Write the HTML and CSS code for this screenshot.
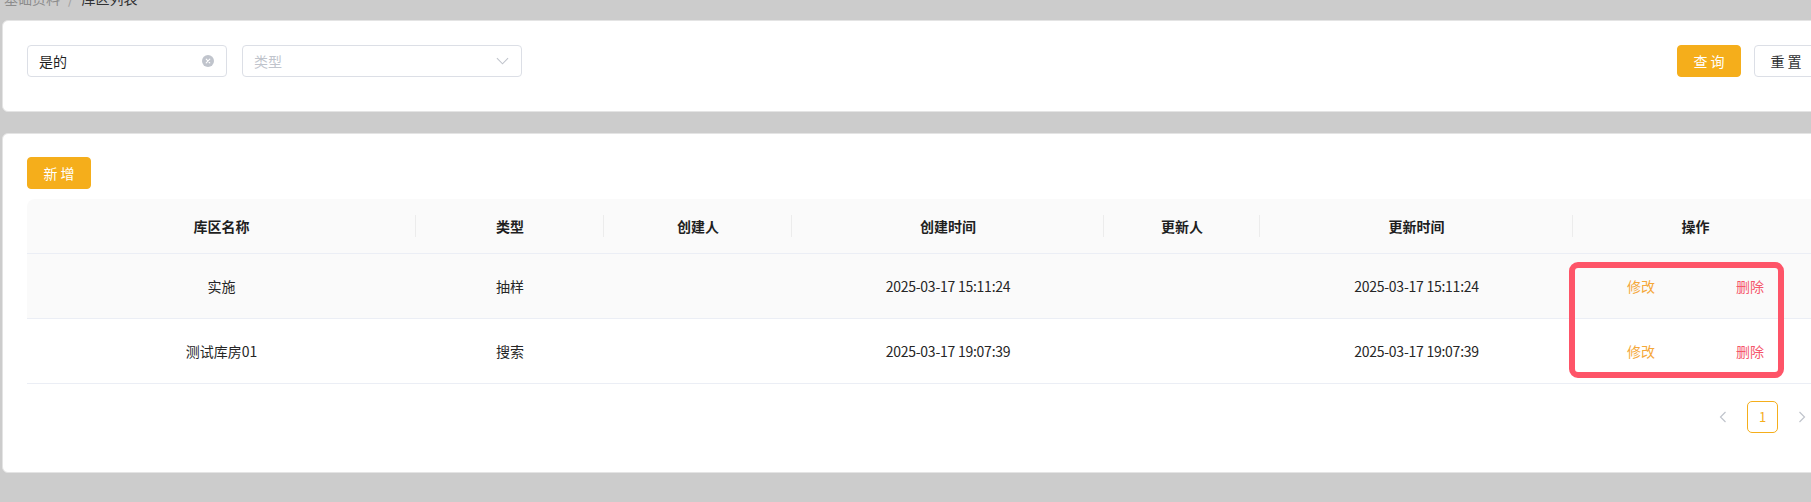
FILE: index.html
```html
<!DOCTYPE html>
<html lang="zh-CN">
<head>
<meta charset="UTF-8">
<meta name="viewport" content="width=device-width,initial-scale=1">
<title>库区列表</title>
<link rel="stylesheet" href="styles.css">
</head>

<body>
    <!-- breadcrumb, mostly scrolled off the top -->
    <div class="crumb">
        <div class="crumb-text">
            <span class="crumb-parent">基础资料</span>
            <span class="crumb-sep">/</span>
            <span class="crumb-current">库区列表</span>
        </div>
    </div>

    <!-- search form -->
    <section class="card search-card">
        <div class="search-fields">
            <div class="field field-input">
                <span class="field-value">是的</span>
                <svg class="clear-icon" viewBox="0 0 12 12">
                    <circle cx="6" cy="6" r="6" fill="#c0c4cc"/>
                    <path d="M4.2 4.2l3.6 3.6M7.8 4.2l-3.6 3.6" stroke="#fff" stroke-width="1.1" stroke-linecap="round"/>
                </svg>
            </div>
            <div class="field field-select">
                <span class="field-placeholder">类型</span>
                <svg class="select-arrow" viewBox="0 0 14 8">
                    <path d="M1 1l6 6 6-6" fill="none" stroke="#c0c4cc" stroke-width="1.2"/>
                </svg>
            </div>
        </div>
        <div class="search-actions">
            <button class="btn btn-primary">查 询</button>
            <button class="btn">重 置</button>
        </div>
    </section>

    <!-- list -->
    <section class="card list-card">
        <div class="toolbar">
            <button class="btn btn-primary">新 增</button>
        </div>

        <div class="table-wrap">
            <table class="data-table">
                <colgroup>
                    <col style="width:389px">
                    <col style="width:188px">
                    <col style="width:188px">
                    <col style="width:312px">
                    <col style="width:156px">
                    <col style="width:313px">
                    <col style="width:245px">
                </colgroup>
                <thead>
                    <tr>
                        <th>库区名称</th>
                        <th>类型</th>
                        <th>创建人</th>
                        <th>创建时间</th>
                        <th>更新人</th>
                        <th>更新时间</th>
                        <th>操作</th>
                    </tr>
                </thead>
                <tbody>
                    <tr class="striped">
                        <td>实施</td>
                        <td>抽样</td>
                        <td></td>
                        <td class="num">2025-03-17 15:11:24</td>
                        <td></td>
                        <td class="num">2025-03-17 15:11:24</td>
                        <td>
                            <div class="row-actions">
                                <a class="link-edit">修改</a>
                                <a class="link-del">删除</a>
                            </div>
                        </td>
                    </tr>
                    <tr>
                        <td>测试库房01</td>
                        <td>搜索</td>
                        <td></td>
                        <td class="num">2025-03-17 19:07:39</td>
                        <td></td>
                        <td class="num">2025-03-17 19:07:39</td>
                        <td>
                            <div class="row-actions">
                                <a class="link-edit">修改</a>
                                <a class="link-del">删除</a>
                            </div>
                        </td>
                    </tr>
                </tbody>
            </table>
            <!-- red highlight drawn over the action column -->
            <div class="mark-box"></div>
        </div>

        <div class="pager">
            <span class="pager-arrow">
                <svg viewBox="0 0 8 12"><path d="M6.5 1L1.5 6l5 5" fill="none" stroke="#c0c4cc" stroke-width="1.2"/></svg>
            </span>
            <span class="pager-num active">1</span>
            <span class="pager-arrow">
                <svg viewBox="0 0 8 12"><path d="M1.5 1l5 5-5 5" fill="none" stroke="#c0c4cc" stroke-width="1.2"/></svg>
            </span>
        </div>
    </section>
</body>
</html>
```

FILE: styles.css
```css
:root{
    --bg:#cccccc;
    --accent:#f5ae1b;
    --line:#ebeef5;
    --text:#303133;
    --muted:#c0c4cc;
}

*{margin:0;padding:0;box-sizing:border-box}
html,body{overflow:hidden}
body{
    font-family:"Noto Sans CJK SC","Liberation Sans",sans-serif;
    font-size:14px;
    color:var(--text);
    background:var(--bg);
    width:1844px;
}

/* breadcrumb ------------- */
.crumb{
    height:20px;
    overflow:hidden;
}
.crumb-text{
    margin-top:-9px;
    padding-left:4px;
    line-height:14px;
    display:flex;
}
.crumb-parent{color:#8c8c8c}
.crumb-sep{color:#a0a0a0;margin:0 8px}
.crumb-current{color:#303133}

/* cards ------------------ */
.card{
    margin-left:2px;
    width:1841px;
    background:#fff;
    border:1px solid #e4e4e4;
    border-radius:6px;
}
.search-card{
    display:flex;
    justify-content:space-between;
    align-items:flex-start;
    padding:24px 24px 34px;
}
.search-fields{
    display:flex;
    gap:15px;
}
.field{
    height:32px;
    border:1px solid #dcdfe6;
    border-radius:4px;
    display:flex;
    align-items:center;
    justify-content:space-between;
    padding:0 10px 0 11px;
}
.field-input{width:200px}
.field-select{width:280px}
.field-value{color:#1f1f1f;line-height:20px}
.field-placeholder{color:var(--muted);line-height:20px}
.clear-icon{width:12px;height:12px;margin-right:2px}
.select-arrow{width:13px;height:8px;margin-right:2px}

.search-actions{
    display:flex;
    gap:13px;
}
.btn{
    font-family:inherit;
    font-size:14px;
    height:32px;
    width:64px;
    border:1px solid #dcdfe6;
    border-radius:4px;
    background:#fff;
    color:#303133;
    line-height:30px;
    cursor:pointer;
}
.btn-primary{
    background:var(--accent);
    border-color:var(--accent);
    color:#fff;
}

.list-card{
    margin-top:21px;
    padding:23px 24px 39px;
}
.toolbar{margin-bottom:10px}

/* table ------------------ */
.table-wrap{
    position:relative;
    border-radius:8px 8px 0 0;
}
.data-table{
    width:1791px;
    table-layout:fixed;
    border-collapse:collapse;
}
.data-table th{
    position:relative;
    height:54px;
    background:#fafafa;
    font-weight:700;
    color:#1f1f1f;
    text-align:center;
    border-bottom:1px solid var(--line);
}
.data-table thead th:first-child{border-top-left-radius:8px}
.data-table th:not(:last-child)::after{
    content:'';
    position:absolute;
    right:0;
    top:16px;
    height:22px;
    width:1px;
    background:#ececec;
}
.data-table td{
    height:65px;
    text-align:center;
    color:#262626;
    border-bottom:1px solid var(--line);
}
.data-table tr.striped td{background:#fafafa}
.data-table td.num{letter-spacing:-0.25px}

.row-actions{
    display:flex;
    justify-content:center;
    gap:81px;
}
.link-edit{color:#f5a83a;cursor:pointer}
.link-del{color:#f5566c;cursor:pointer}

.mark-box{
    position:absolute;
    left:1542px;
    top:63px;
    width:215px;
    height:116px;
    border:6px solid #fe5468;
    border-radius:9px;
    pointer-events:none;
}

/* pagination ------------- */
.pager{
    margin-top:17px;
    display:flex;
    justify-content:flex-end;
    align-items:center;
    gap:8px;
}
.pager-arrow{
    width:32px;
    height:32px;
    display:flex;
    align-items:center;
    justify-content:center;
}
.pager-arrow svg{width:8px;height:12px}
.pager-num{
    width:31px;
    height:32px;
    border-radius:5px;
    display:flex;
    align-items:center;
    justify-content:center;
    font-size:13px;
}
.pager-num.active{
    border:1px solid var(--accent);
    color:var(--accent);
}
```
